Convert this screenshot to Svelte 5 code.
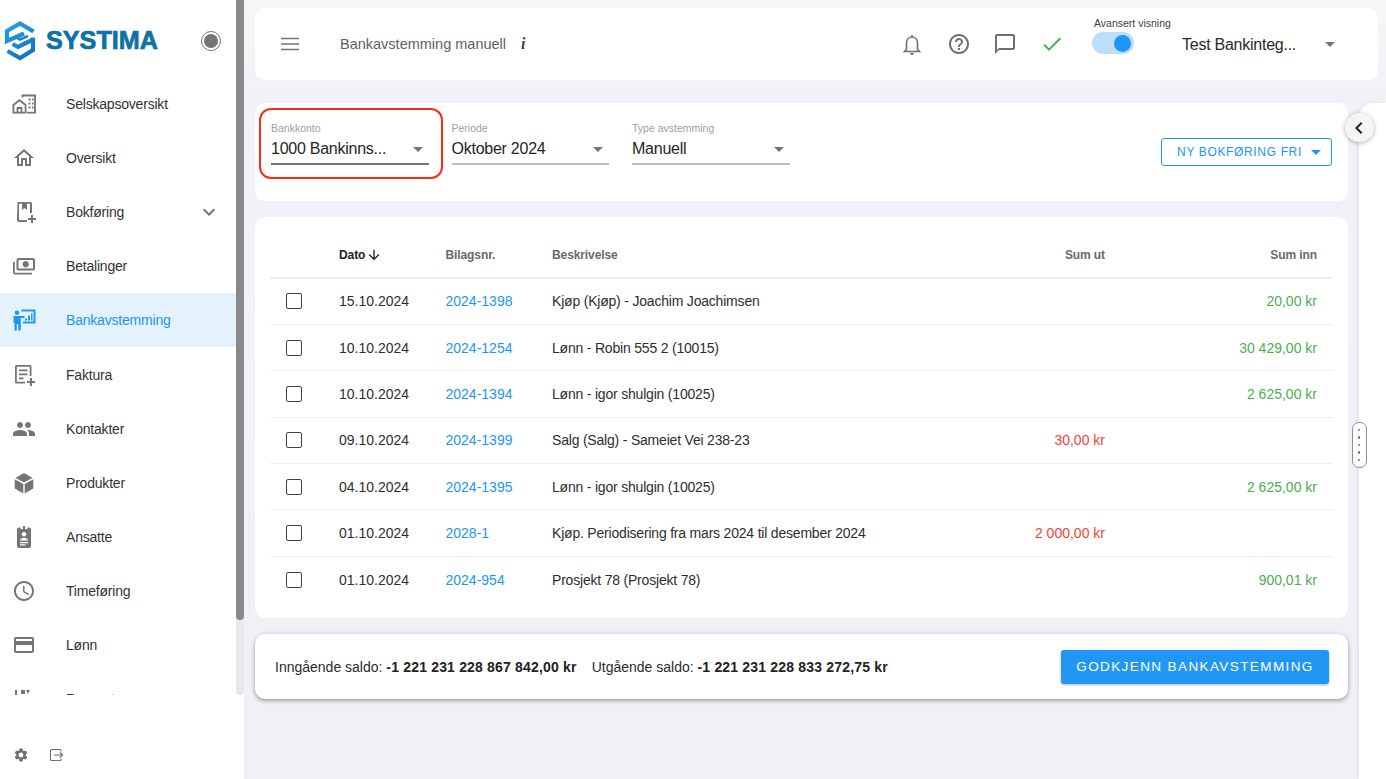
<script>
  const nav = [
    { label: 'Selskapsoversikt', icon: 'company' },
    { label: 'Oversikt', icon: 'home' },
    { label: 'Bokføring', icon: 'book', chevron: true },
    { label: 'Betalinger', icon: 'pay' },
    { label: 'Bankavstemming', icon: 'bank', active: true },
    { label: 'Faktura', icon: 'invoice' },
    { label: 'Kontakter', icon: 'people' },
    { label: 'Produkter', icon: 'box' },
    { label: 'Ansatte', icon: 'badge' },
    { label: 'Timeføring', icon: 'clock' },
    { label: 'Lønn', icon: 'card' },
    { label: 'Rapporter', icon: 'report' }
  ];
  const rows = [
    ['15.10.2024', '2024-1398', 'Kjøp (Kjøp) - Joachim Joachimsen', '', '20,00 kr'],
    ['10.10.2024', '2024-1254', 'Lønn - Robin 555 2 (10015)', '', '30 429,00 kr'],
    ['10.10.2024', '2024-1394', 'Lønn - igor shulgin (10025)', '', '2 625,00 kr'],
    ['09.10.2024', '2024-1399', 'Salg (Salg) - Sameiet Vei 238-23', '30,00 kr', ''],
    ['04.10.2024', '2024-1395', 'Lønn - igor shulgin (10025)', '', '2 625,00 kr'],
    ['01.10.2024', '2028-1', 'Kjøp. Periodisering fra mars 2024 til desember 2024', '2 000,00 kr', ''],
    ['01.10.2024', '2024-954', 'Prosjekt 78 (Prosjekt 78)', '', '900,01 kr']
  ];
  const filters = [
    { label: 'Bankkonto', value: '1000 Bankinns...', focus: true },
    { label: 'Periode', value: 'Oktober 2024' },
    { label: 'Type avstemming', value: 'Manuell' }
  ];
</script>

<div class="app">
  <aside class="sidebar">
    <div class="scroller">
      <div class="logo-row">
        <svg class="logo-mark" viewBox="0 0 32 40" width="32" height="40">
          <defs>
            <linearGradient id="lg" gradientUnits="userSpaceOnUse" x1="4" y1="0" x2="28" y2="40">
              <stop offset="0" stop-color="#2aa3e8" />
              <stop offset="0.55" stop-color="#1a86cc" />
              <stop offset="1" stop-color="#0f6fa8" />
            </linearGradient>
          </defs>
          <g fill="none" stroke="url(#lg)" stroke-width="4.200" stroke-linejoin="miter">
            <path d="M29.500 10.500 16 2.500 3 10V20L20 12.500" />
            <path d="M29 16.500V29L16 37 3.500 30" />
            <path d="M28 19 14 26 8.500 23" />
            <path d="M10 15.500 16 18.500 24 15" stroke-width="2.500" />
          </g>
        </svg>
        <span class="logo-text">SYSTIMA</span>
        <span class="radio"><span></span></span>
      </div>
      <nav>
        {#each nav as item}
          <div class="nav-item" class:active={item.active}>
            <span class="nav-icon">
              {#if item.icon === 'company'}
                <svg viewBox="0 0 24 24" width="24" height="24"><path fill="none" stroke="currentColor" stroke-width="1.800" d="M10.500 5.500V3.500H23V20.600H15M1.400 20.600V13L7.500 8.200 13.600 13V20.600ZM5.500 20.600V16H9.500V20.600" /><path fill="currentColor" d="M16.500 6.500h2v2h-2zM20 6.500h1.500v2H20zM16.500 10.500h2v2h-2zM20 10.500h1.500v2H20zM16.500 14.500h2v2h-2zM20 14.500h1.500v2H20z" /></svg>
              {:else if item.icon === 'home'}
                <svg viewBox="0 0 24 24" width="24" height="24"><path fill="currentColor" d="M12 5.690l5 4.500V18h-2v-6H9v6H7v-7.810l5-4.500M12 3L2 12h3v8h6v-6h2v6h6v-8h3L12 3z" /></svg>
              {:else if item.icon === 'book'}
                <svg viewBox="0 0 24 24" width="24" height="24"><path fill="currentColor" d="M5.500 2H18.500A1.500 1.500 0 0 1 20 3.500V13H18V3.800H15V10L12.500 8 10 10V3.800H7V20H15V22H6.500A2.500 2.500 0 0 1 5 20zM19 15h2v3h3v2h-3v3h-2v-3h-3v-2h3z" /></svg>
              {:else if item.icon === 'pay'}
                <svg viewBox="0 0 24 24" width="24" height="24"><path fill="currentColor" fill-rule="evenodd" d="M23 14.500V6c0-1-.9-2-2-2H6.500C5.400 4 4.500 5 4.500 6v8.500c0 1.100.9 2 2 2H21c1.100 0 2-.9 2-2zM13.750 7c-1.700 0-3.200 1.400-3.200 3.200s1.500 3.200 3.200 3.200 3.200-1.400 3.200-3.200S15.450 7 13.750 7zM6.500 6H21v8.500H6.500zM2.800 8H1v10.500C1 19.600 1.900 20.500 3 20.500H20V18.700H2.800z" /></svg>
              {:else if item.icon === 'bank'}
                <svg viewBox="0 0 24 24" width="24" height="24"><path fill="currentColor" d="M5 2.500a2.300 2.300 0 1 1 0 4.600 2.300 2.300 0 0 1 0-4.600zM1.500 8H8.500L12.500 8V10H8.800V22.500H6.200V16H4.800V22.500H2.500V15H1.500zM9.500 1.500H23.500V15.500H11V13.500H21.500V3.500H9.500zM13 10.500H15V12.500H13zM16 7.500H18V12.500H16zM19 5.500H20.500V12.500H19z" /></svg>
              {:else if item.icon === 'invoice'}
                <svg viewBox="0 0 24 24" width="24" height="24"><path fill="currentColor" d="M4.500 2H18A1.500 1.500 0 0 1 19.500 3.500V13H17.700V3.800H4.800V18.700H13V20.500H4.500A1.500 1.500 0 0 1 3 19V3.500A1.500 1.500 0 0 1 4.500 2zM7 6.500H15.500V8.300H7zM7 10.500H15.500V12.300H7zM7 14.500H11.500V16.300H7zM18 15h2v3h3v2h-3v3h-2v-3h-3v-2h3z" /></svg>
              {:else if item.icon === 'people'}
                <svg viewBox="0 0 24 24" width="24" height="24"><path fill="currentColor" d="M16 11c1.660 0 2.990-1.340 2.990-3S17.660 5 16 5c-1.660 0-3 1.340-3 3s1.340 3 3 3zm-8 0c1.660 0 2.990-1.340 2.990-3S9.660 5 8 5C6.340 5 5 6.340 5 8s1.340 3 3 3zm0 2c-2.330 0-7 1.170-7 3.500V19h14v-2.500c0-2.330-4.670-3.500-7-3.500zm8 0c-.29 0-.62.02-.97.05 1.160.84 1.970 1.970 1.970 3.450V19h6v-2.500c0-2.330-4.670-3.500-7-3.500z" /></svg>
              {:else if item.icon === 'box'}
                <svg viewBox="0 0 24 24" width="24" height="24"><path fill="currentColor" d="M12 2 20.500 6.800 12 11.600 3.500 6.800zM2.700 8.300 11.300 13V22.500L2.700 17.500zM21.300 8.300V17.500L12.700 22.500V13z" /></svg>
              {:else if item.icon === 'badge'}
                <svg viewBox="0 0 24 24" width="24" height="24"><path fill="currentColor" fill-rule="evenodd" d="M11 1h2V4h2.500V2.500H17A2 2 0 0 1 19 4.500V21a2 2 0 0 1-2 2H7a2 2 0 0 1-2-2V4.500a2 2 0 0 1 2-2h1.500V4H11zM12 7a2.200 2.200 0 1 0 0 4.400A2.200 2.200 0 0 0 12 7zM8 15.500c0-1.800 2.500-2.700 4-2.700s4 .9 4 2.700zM8 17h8v1.200H8zM8 19.300h5.500v1.200H8z" /></svg>
              {:else if item.icon === 'clock'}
                <svg viewBox="0 0 24 24" width="24" height="24"><path fill="currentColor" d="M11.990 2C6.470 2 2 6.480 2 12s4.470 10 9.990 10C17.520 22 22 17.520 22 12S17.520 2 11.990 2zM12 20c-4.420 0-8-3.580-8-8s3.580-8 8-8 8 3.580 8 8-3.580 8-8 8zm.5-13H11v6l5.250 3.150.75-1.230-4.500-2.670z" /></svg>
              {:else if item.icon === 'card'}
                <svg viewBox="0 0 24 24" width="24" height="24"><path fill="currentColor" d="M20 4H4c-1.110 0-1.990.89-1.990 2L2 18c0 1.110.89 2 2 2h16c1.110 0 2-.89 2-2V6c0-1.110-.89-2-2-2zm0 14H4v-6h16v6zm0-10H4V6h16v2z" /></svg>
              {:else}
                <svg viewBox="0 0 24 24" width="24" height="24"><path fill="currentColor" d="M3 3h2v18H3zM9 3h4v4H9zM14 3h4l-2 4z" /></svg>
              {/if}
            </span>
            <span class="nav-label">{item.label}</span>
            {#if item.chevron}
              <svg class="chev" viewBox="0 0 24 24" width="24" height="24"><path fill="#757575" d="M16.590 8.590L12 13.170 7.410 8.590 6 10l6 6 6-6z" /></svg>
            {/if}
          </div>
        {/each}
      </nav>
      <div class="track"><div class="thumb"></div></div>
    </div>
    <div class="side-foot">
      <svg viewBox="0 0 24 24" width="16" height="16"><path fill="#6f6f6f" d="M19.140 12.940c.04-.3.060-.61.060-.94 0-.32-.02-.64-.07-.94l2.030-1.580c.18-.14.23-.41.12-.61l-1.920-3.320c-.12-.22-.37-.29-.59-.22l-2.390.96c-.5-.38-1.030-.7-1.620-.94l-.36-2.540c-.04-.24-.24-.41-.48-.41h-3.840c-.24 0-.43.17-.47.41l-.36 2.540c-.59.24-1.130.57-1.620.94l-2.390-.96c-.22-.08-.47 0-.59.22L2.740 8.870c-.12.21-.08.47.12.61l2.030 1.580c-.05.3-.09.63-.09.94s.02.64.07.94l-2.030 1.580c-.18.14-.23.41-.12.61l1.920 3.320c.12.22.37.29.59.22l2.390-.96c.5.38 1.030.7 1.620.94l.36 2.540c.05.24.24.41.48.41h3.840c.24 0 .44-.17.47-.41l.36-2.540c.59-.24 1.130-.56 1.620-.94l2.390.96c.22.08.47 0 .59-.22l1.920-3.320c.12-.22.07-.47-.12-.61l-2.010-1.580zM12 15.600c-1.980 0-3.600-1.620-3.600-3.600s1.620-3.600 3.600-3.600 3.600 1.620 3.600 3.600-1.620 3.600-3.600 3.600z" /></svg>
      <svg viewBox="0 0 16 16" width="16" height="16"><path fill="none" stroke="#6f6f6f" stroke-width="1.100" d="M13 4.500V3.500A1 1 0 0 0 12 2.500H3.500A1 1 0 0 0 2.500 3.500V12.500A1 1 0 0 0 3.500 13.500H12A1 1 0 0 0 13 12.500V11.500M6 8H14.500M11.800 5.300 14.500 8 11.800 10.700" /></svg>
    </div>
  </aside>

  <main class="main">
    <header class="topbar card">
      <svg class="menu" viewBox="0 0 18 14" width="18" height="14"><path stroke="#757575" stroke-width="1.700" d="M0 1.500H18M0 7H18M0 12.500H18" /></svg>
      <span class="title">Bankavstemming manuell</span>
      <span class="info">i</span>
      <div class="spacer"></div>
      <svg class="tool" viewBox="0 0 24 24" width="24" height="24"><path fill="none" stroke="#6f6f6f" stroke-width="1.600" d="M6.500 17.500V11c0-3.300 2.200-6 5.500-6s5.500 2.700 5.500 6v6.500L19.500 19.500H4.500zM12 5V3" /><path fill="#6f6f6f" d="M10 21h4a2 2 0 0 1-4 0z" /></svg>
      <svg class="tool" viewBox="0 0 24 24" width="24" height="24"><path fill="#6f6f6f" d="M11 18h2v-2h-2v2zm1-16C6.480 2 2 6.480 2 12s4.480 10 10 10 10-4.480 10-10S17.520 2 12 2zm0 18c-4.410 0-8-3.590-8-8s3.590-8 8-8 8 3.590 8 8-3.590 8-8 8zm0-14c-2.210 0-4 1.790-4 4h2c0-1.100.9-2 2-2s2 .9 2 2c0 2-3 1.750-3 5h2c0-2.250 3-2.500 3-5 0-2.210-1.790-4-4-4z" /></svg>
      <svg class="tool" viewBox="0 0 24 24" width="24" height="24"><path fill="#6f6f6f" d="M20 2H4c-1.100 0-2 .9-2 2v18l4-4h14c1.100 0 2-.9 2-2V4c0-1.100-.9-2-2-2zm0 14H6l-2 2V4h16v12z" /></svg>
      <svg class="tool" viewBox="0 0 24 24" width="24" height="24"><path fill="#4caf50" d="M9 16.170L4.830 12l-1.420 1.410L9 19 21 7l-1.410-1.410z" /></svg>
      <div class="switch-box">
        <span class="switch-label">Avansert visning</span>
        <span class="switch"><span class="knob"></span></span>
      </div>
      <span class="company">Test Bankinteg...</span>
      <span class="caret"></span>
    </header>

    <div class="content">
      <div class="workspace">
        <section class="filters card">
          {#each filters as f}
            <div class="field" class:focus={f.focus}>
              <span class="field-label">{f.label}</span>
              <span class="field-value">{f.value}<span class="caret"></span></span>
            </div>
          {/each}
          <div class="spacer"></div>
          <button class="outline">NY BOKFØRING FRI<span class="caret blue"></span></button>
        </section>

        <section class="table card">
          <div class="row head">
            <span></span>
            <span class="sorted">Dato<svg viewBox="0 0 24 24" width="16" height="16"><path fill="#212121" d="M20 12l-1.410-1.410L13 16.170V4h-2v12.170l-5.580-5.590L4 12l8 8 8-8z" /></svg></span>
            <span>Bilagsnr.</span>
            <span>Beskrivelse</span>
            <span class="num">Sum ut</span>
            <span class="num">Sum inn</span>
          </div>
          {#each rows as r}
            <div class="row">
              <span class="check"><i></i></span>
              <span>{r[0]}</span>
              <span class="link">{r[1]}</span>
              <span class="desc">{r[2]}</span>
              <span class="num red">{r[3]}</span>
              <span class="num green">{r[4]}</span>
            </div>
          {/each}
        </section>

        <section class="summary card">
          <span>Inngående saldo: <b>-1 221 231 228 867 842,00 kr</b></span>
          <span>Utgående saldo: <b>-1 221 231 228 833 272,75 kr</b></span>
          <div class="spacer"></div>
          <button class="primary">GODKJENN BANKAVSTEMMING</button>
        </section>
      </div>
      <aside class="panel">
        <button class="collapse" aria-label="Skjul">
          <svg viewBox="0 0 24 24" width="24" height="24"><path fill="#212121" d="M15.410 7.410L14 6l-6 6 6 6 1.410-1.410L10.830 12z" /></svg>
        </button>
        <div class="handle"><span></span><span></span><span></span><span></span><span></span></div>
      </aside>
    </div>
  </main>
</div>

<style>
  :global(body) { margin: 0; background: #f0f2f7; }
  .app {
    display: flex; width: 1386px; height: 779px; overflow: hidden;
    font-family: "Liberation Sans", Arial, sans-serif; color: #262626; font-size: 14px;
  }
  .sidebar { width: 244px; flex: none; background: #fff; display: flex; flex-direction: column; }
  .scroller { position: relative; height: 695px; overflow: hidden; }
  .logo-row { height: 77px; display: flex; align-items: center; padding: 0 0 0 4px; box-sizing: border-box; position: relative; }
  .logo-mark { flex: none; margin-top: 5px; }
  .logo-text {
    font-family: "Liberation Sans", sans-serif; font-weight: 700; font-size: 25.200px; margin-left: 10px; margin-top: 3px;
    color: #0d72a6; -webkit-text-stroke: 0.7px #0d72a6;
  }
  .radio {
    position: absolute; left: 201px; top: 31px; width: 20px; height: 20px; box-sizing: border-box; border: 1.500px solid #757575; border-radius: 50%;
    display: flex; align-items: center; justify-content: center;
  }
  .radio span { width: 14px; height: 14px; border-radius: 50%; background: #757575; }
  .nav-item { height: 54.100px; display: flex; align-items: center; position: relative; color: #333; font-size: 14px; letter-spacing: -0.2px; width: 236px; }
  .nav-item.active { background: #e3f2fd; color: #2196f3; }
  .nav-icon { width: 47px; display: flex; justify-content: center; color: #757575; flex: none; }
  .active .nav-icon { color: #2196f3; }
  .nav-label { margin-left: 19px; }
  .chev { position: absolute; left: 197px; top: 15px; }
  .track { position: absolute; left: 236px; top: 0; width: 8px; height: 695px; background: #e8e8e8; border-radius: 0 0 4px 4px; }
  .thumb { height: 620px; background: #8a8a8a; border-radius: 0 0 4px 4px; }
  .side-foot { display: flex; gap: 19px; padding: 52px 0 0 13px; }

  .main { flex: 1; min-width: 0; display: flex; flex-direction: column; padding: 8px 8px 0 11px; background: linear-gradient(180deg, #f6f6f6 0, #f6f6f6 8px, #f1f2f7 90px, #eff1f6 100%); }
  .card { background: #fff; border-radius: 10px; }
  .topbar { height: 72px; flex: none; display: flex; align-items: center; padding-left: 26px; padding-right: 43px; box-sizing: border-box; }
  .menu { flex: none; }
  .title { margin-left: 41px; color: #616161; font-size: 14.500px; }
  .info { margin-left: 15px; font-family: "Liberation Serif", serif; font-style: italic; font-weight: 700; font-size: 16px; color: #424242; }
  .spacer { flex: 1; }
  .tool { flex: none; margin-right: 22.400px; }
  .switch-box { position: relative; width: 90px; margin-left: 6px; align-self: stretch; flex: none; }
  .switch-label { position: absolute; left: 2px; top: 9px; font-size: 10.500px; color: #424242; white-space: nowrap; }
  .switch { position: absolute; left: 0; top: 24px; width: 42px; height: 22px; border-radius: 11px; background: #bbdefb; }
  .knob { position: absolute; right: 3px; top: 2.500px; width: 17px; height: 17px; border-radius: 50%; background: #2196f3; }
  .company { font-size: 16px; letter-spacing: -0.25px; color: #2b2b2b; width: 143px; white-space: nowrap; flex: none; padding-top: 1px; }
  .caret { display: inline-block; width: 0; height: 0; border-left: 5.500px solid transparent; border-right: 5.500px solid transparent; border-top: 5.500px solid #757575; flex: none; }
  .caret.blue { border-top-color: #2196f3; margin-left: 9px; vertical-align: 1px; }

  .content { flex: 1; display: flex; min-height: 0; margin-top: 23px; }
  .workspace { width: 1093px; flex: none; display: flex; flex-direction: column; gap: 16px; }
  .filters { height: 98px; flex: none; display: flex; align-items: flex-start; gap: 23px; padding: 18px 16px 0 16px; box-sizing: border-box; position: relative; }
  .field { width: 157.500px; height: 42px; display: flex; flex-direction: column; position: relative; border-bottom: 2px solid #bdbdbd; box-sizing: content-box; }
  .field.focus { border-bottom-color: #757575; }
  .field.focus::after { content: ""; position: absolute; left: -12px; top: -13px; width: 184px; height: 71px; box-sizing: border-box; border: 2.500px solid #ff2a12; border-radius: 12px; }
  .field-label { font-size: 10.500px; color: #9e9e9e; line-height: 14px; }
  .field-value { display: flex; align-items: center; justify-content: space-between; font-size: 16px; letter-spacing: -0.25px; color: #262626; line-height: 26px; padding-right: 6px; margin-top: 1px; }
  button { font-family: inherit; cursor: pointer; }
  .outline { margin-top: 17px; margin-left: 1px; width: 171px; height: 28px; background: #fff; border: 1px solid #2196f3; border-radius: 3px; color: #2196f3; font-size: 12px; letter-spacing: 0.65px; padding: 0 0 0 5px; white-space: nowrap; }

  .table { height: 401px; flex: none; padding: 16px 15px 0; box-sizing: border-box; }
  .row { display: grid; grid-template-columns: 69px 106.500px 106.500px 1fr 140px 212px; grid-template-rows: 1fr; align-items: center; height: 46.400px; box-sizing: border-box; border-bottom: 1.500px solid #eeeeee; font-size: 14px; color: #2e2e2e; padding-right: 16px; }
  .row:last-child { border-bottom: 0; }
  .row.head { height: 45.500px; font-size: 12px; font-weight: 700; color: #6a6a6a; border-bottom: 2px solid #eeeeee; letter-spacing: -0.1px; }
  .sorted { color: #212121; display: flex; align-items: center; gap: 1px; }
  .desc { letter-spacing: -0.2px; }
  .num { text-align: right; }
  .link { color: #2196f3; }
  .red { color: #f44336; }
  .green { color: #4caf50; }
  .check { display: flex; padding-left: 16px; }
  .check i { display: block; border: 1.500px solid #424242; border-radius: 2px; box-sizing: content-box; width: 14px; height: 14px; }

  .summary { height: 65px; flex: none; display: flex; align-items: center; gap: 15px; padding: 0 20px; box-sizing: border-box; box-shadow: 0 2px 4px rgba(0,0,0,.3), 0 0 6px rgba(0,0,0,.08); font-size: 14px; color: #2b2b2b; }
  .summary b { font-weight: 700; color: #222; letter-spacing: 0.18px; }
  .primary { width: 268px; height: 34px; margin-right: -1px; background: #2196f3; color: #fff; border: 0; border-radius: 3px; font-size: 13.500px; letter-spacing: 1.400px; box-shadow: 0 1px 3px rgba(0,0,0,.3); padding: 0; }

  .panel { position: relative; width: 27px; flex: none; margin-left: 11px; background: #fff; border-radius: 14px 0 0 0; box-shadow: -2px 0 4px rgba(0,0,0,.06); }
  .collapse { position: absolute; left: -14.500px; top: 10px; width: 29px; height: 29px; border-radius: 50%; border: 0; background: #f5f5f5; box-shadow: 0 1px 5px rgba(0,0,0,.3); display: flex; align-items: center; justify-content: center; padding: 0; }
  .handle { position: absolute; left: -7.500px; top: 319px; width: 15px; height: 46px; box-sizing: border-box; background: #fff; border: 1px solid #8f8f8f; border-radius: 7px; display: flex; flex-direction: column; align-items: center; justify-content: center; gap: 5px; }
  .handle span { width: 2.500px; height: 2.500px; border-radius: 50%; background: #757575; }
</style>
